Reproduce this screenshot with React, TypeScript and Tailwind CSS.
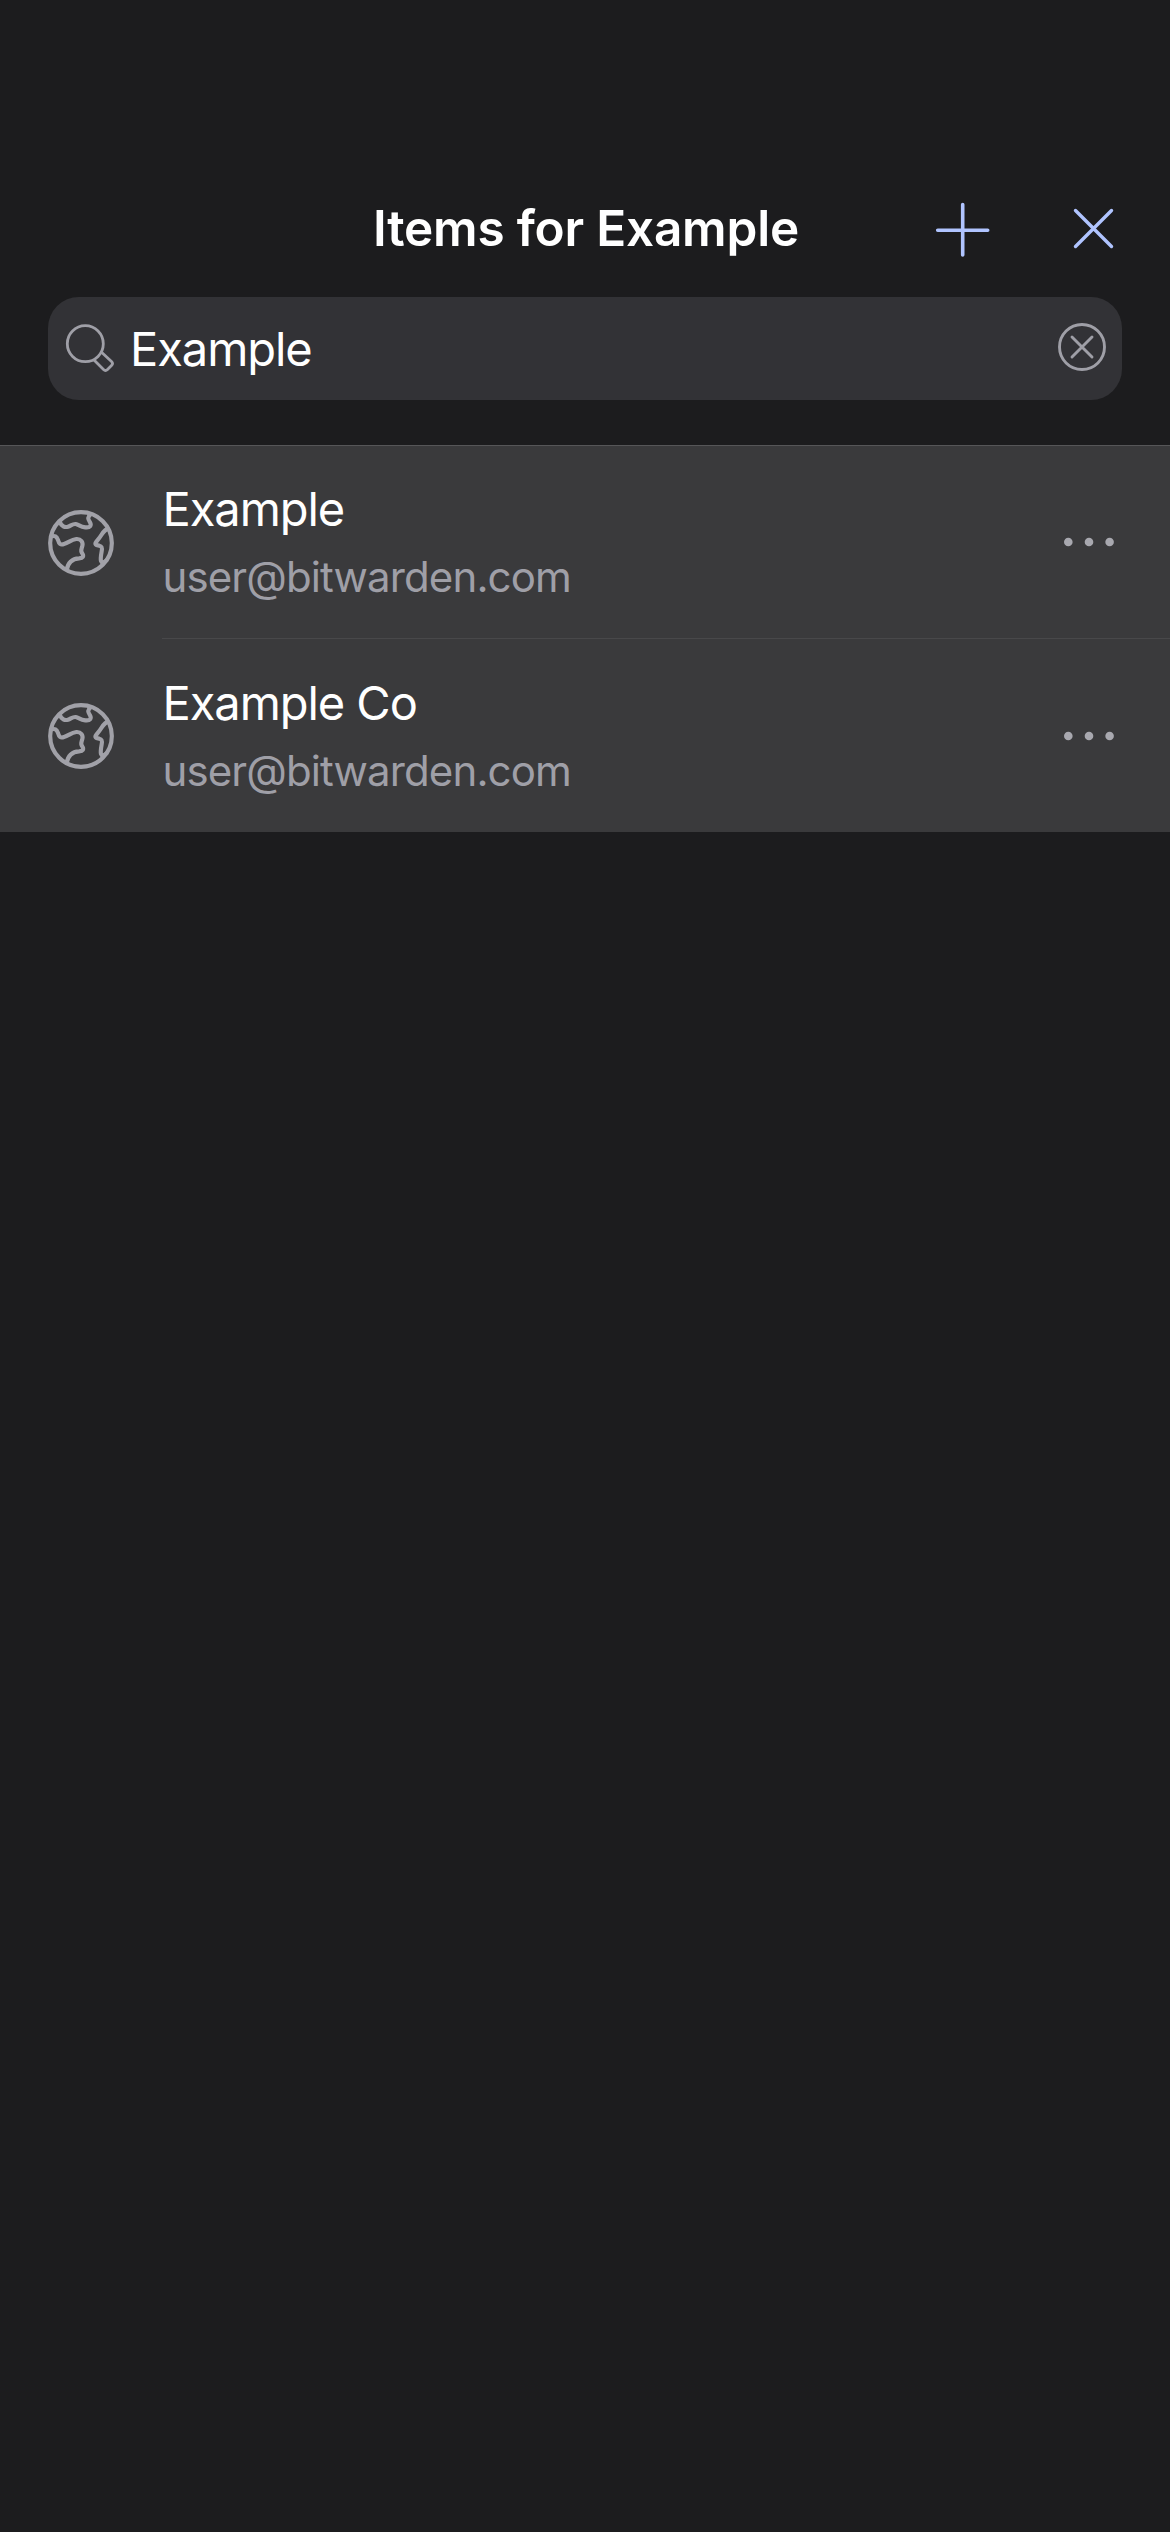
const items = [
  { name: 'Example', user: 'user@bitwarden.com' },
  { name: 'Example Co', user: 'user@bitwarden.com' },
];

function Globe() {
  return (
    <svg className="h-[66px] w-[66px] shrink-0" viewBox="54 57 198 198" fill="none" stroke="#a1a1a8" strokeWidth="12.5" strokeLinejoin="round">
      <circle cx="153" cy="156" r="92.5" />
      <path d="M89 91C94 107 105 110 114 107C123 104 128 98 137 99C147 101 150 107 166 109C181 111 185 103 180 94C173 83 172 80 182 69" />
      <path d="M62 137C75 132 80 136 84 147C87 158 91 163 102 159C117 155 122 146 139 144C153 143 160 154 157 165C154 176 151 179 156 186C163 196 159 201 147 202C129 203 114 214 110 237" />
      <path d="M238 112C226 114 220 122 214 132C207 144 201 148 197 155C194 162 202 163 208 164C217 166 217 171 215 181C213 192 211 204 213 210C216 218 224 214 231 206" />
    </svg>
  );
}

function Dots() {
  return (
    <svg className="h-[10px] w-[52px]" viewBox="0 0 52 10" fill="#a8a8af">
      <circle cx="5.3" cy="5" r="4.3" />
      <circle cx="26" cy="5" r="4.3" />
      <circle cx="46.6" cy="5" r="4.3" />
    </svg>
  );
}

export default function App() {
  return (
    <div className="flex h-[2532px] w-[1170px] flex-col bg-[#1c1c1e] font-['Inter',sans-serif] text-white">
      <header className="mt-[180px] grid h-[100px] grid-cols-[1fr_auto_1fr] items-center">
        <div />
        <h1 className="relative top-[-2px] left-px whitespace-nowrap text-[49.5px] leading-[60px] font-semibold tracking-[-0.2px]">Items for Example</h1>
        <div className="flex items-center justify-end gap-[82px] pr-[52px]">
          <button aria-label="Add">
            <svg className="block h-[56px] w-[56px]" viewBox="0 0 56 56" stroke="#b0c4ff" strokeWidth="3.6" strokeLinecap="round">
              <path d="M28.7 3.6V53.9M3.7 29.3H53.7" transform="translate(0 -1)" />
            </svg>
          </button>
          <button aria-label="Close">
            <svg className="block h-[46px] w-[46px]" viewBox="0 0 46 46" stroke="#b0c4ff" strokeWidth="3.4" strokeLinecap="round">
              <path d="M3.5 3.5L39.5 39.5M39.5 3.5L3.5 39.5" />
            </svg>
          </button>
        </div>
      </header>

      <div className="mx-12 mt-[17px] flex h-[103px] items-center rounded-[31px] bg-[#323236] pr-[16px] pl-[17px]">
        <svg className="h-[50px] w-[50px] shrink-0" viewBox="0 0 50 50" fill="none" stroke="#9f9fa7" strokeWidth="2.8" strokeLinejoin="round">
          <circle cx="20.3" cy="19.7" r="18" />
          <path d="M29 36L38.5 45.5Q40.5 47.5 42.5 45.5L46.5 41.5Q48.5 39.5 46.5 37.5L36.8 28.5" />
        </svg>
        <span className="ml-[15px] flex-1 text-[47px] leading-[58px] tracking-[-1.05px]">Example</span>
        <svg className="mb-[3px] h-[48px] w-[48px] shrink-0" viewBox="0 0 48 48" fill="none" stroke="#9f9fa7" strokeWidth="2.9" strokeLinecap="round">
          <circle cx="24" cy="24" r="22.5" />
          <path d="M14 14L34 34M34 14L14 34" />
        </svg>
      </div>

      <ul className="mt-[45px] border-t border-[#565658] bg-[#3a3a3c]">
        {items.map((item, i) => (
          <li key={item.name} className="flex h-[193px] items-center pl-12">
            <Globe />
            <div className={`ml-[48px] flex h-[193px] flex-1 items-center justify-between pr-[55px] ${i === 0 ? 'border-b border-[#48484a]' : ''}`}>
              <div className="pt-[3px] pl-[0.5px]">
                <p className="text-[47px] leading-[64px] tracking-[-1.05px]">{item.name}</p>
                <p className="mt-[3px] text-[42px] leading-[66px] tracking-[-0.88px] text-[#9f9fa7]">{item.user}</p>
              </div>
              <Dots />
            </div>
          </li>
        ))}
      </ul>
    </div>
  );
}
